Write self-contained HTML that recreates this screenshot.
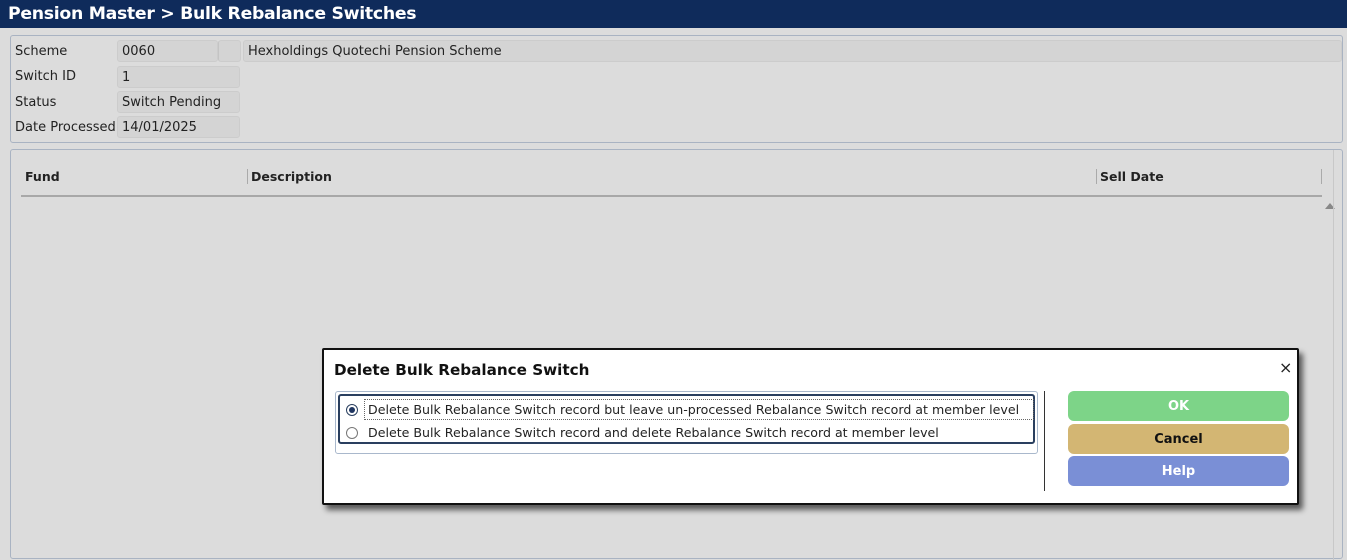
<!DOCTYPE html>
<html><head><style>
*{box-sizing:border-box;margin:0;padding:0}
body{width:1347px;height:548px;overflow:hidden;background:#dcdcdc;font-family:"DejaVu Sans","Liberation Sans",sans-serif;font-size:13px;color:#222;position:relative}
.title{position:absolute;left:0;top:0;width:1347px;height:28px;background:#0f2b5b;color:#fff;font-weight:bold;font-size:17.3px;line-height:28px;padding-left:8px;font-family:"DejaVu Sans",sans-serif;letter-spacing:-0.3px}
.p1{position:absolute;left:10px;top:35px;width:1333px;height:108px;border:1px solid #a9b3c2;border-radius:3px;background:#dcdcdc}
.lbl{position:absolute;left:4px}
.fld{position:absolute;background:#d4d4d4;border:1px solid #ccc;border-radius:3px;height:22px;line-height:22px;padding-left:4px}
.p2{position:absolute;left:10px;top:149px;width:1333px;height:410px;border:1px solid #a9b3c2;border-radius:3px;background:#dcdcdc}
.hd{position:absolute;top:19px;font-weight:bold;font-size:12.5px}
.dlg{position:absolute;left:322px;top:348px;width:977px;height:157px;background:#fff;border:2px solid #111;border-radius:2px;box-shadow:4px 5px 6px rgba(0,0,0,.6)}
.btn{position:absolute;left:744px;width:221px;height:30px;border-radius:6px;text-align:center;line-height:32px;font-weight:bold;font-size:13px}
.rad{position:absolute;left:6px;width:12px;height:12px;border:1px solid #777;border-radius:50%;background:#fff}
.dlg .opt{font-size:12.6px}
</style></head><body>
<div class="title">Pension Master &gt; Bulk Rebalance Switches</div>
<div class="p1">
<div class="lbl" style="top:8px">Scheme</div>
<div class="fld" style="left:106px;top:4px;width:101px">0060</div>
<div class="fld" style="left:207px;top:4px;width:23px;border-left:1px solid #c4c4c4"></div>
<div class="fld" style="left:232px;top:4px;width:1099px">Hexholdings Quotechi Pension Scheme</div>
<div class="lbl" style="top:33px">Switch ID</div>
<div class="fld" style="left:106px;top:30px;width:123px">1</div>
<div class="lbl" style="top:59px">Status</div>
<div class="fld" style="left:106px;top:55px;width:123px">Switch Pending</div>
<div class="lbl" style="top:84px">Date Processed</div>
<div class="fld" style="left:106px;top:80px;width:123px">14/01/2025</div>
</div>
<div class="p2">
<div class="hd" style="left:14px">Fund</div>
<div style="position:absolute;left:236px;top:19px;width:1px;height:15px;background:#aaa"></div>
<div class="hd" style="left:240px">Description</div>
<div style="position:absolute;left:1085px;top:19px;width:1px;height:15px;background:#aaa"></div>
<div class="hd" style="left:1089px">Sell Date</div>
<div style="position:absolute;left:1310px;top:19px;width:1px;height:15px;background:#aaa"></div>
<div style="position:absolute;left:10px;top:45px;width:1301px;height:2px;background:#a8a8a8"></div>
<div style="position:absolute;left:1314px;top:53px;width:0;height:0;border-left:5px solid transparent;border-right:5px solid transparent;border-bottom:6px solid #888"></div>
<div style="position:absolute;left:1322px;top:0;width:1px;height:410px;background:#c8c8c8"></div>
</div>
<div class="dlg">
<div style="position:absolute;left:10px;top:11px;font-size:15.2px;font-weight:bold;color:#111">Delete Bulk Rebalance Switch</div>
<div style="position:absolute;left:955px;top:8px;font-size:16px">×</div>
<div style="position:absolute;left:11px;top:41px;width:703px;height:63px;border:1px solid #a9b8cc;border-radius:3px"></div>
<div style="position:absolute;left:14px;top:44px;width:697px;height:50px;border:2px solid #2a3f5f;border-radius:3px">
<div class="rad" style="top:8px;border-color:#2a3f5f"><div style="position:absolute;left:2px;top:2px;width:6px;height:6px;border-radius:50%;background:#1f3560"></div></div>
<div class="opt" style="position:absolute;left:24px;top:3px;width:670px;height:21px;border:1px dotted #666;line-height:20px;padding-left:3px;white-space:nowrap">Delete Bulk Rebalance Switch record but leave un-processed Rebalance Switch record at member level</div>
<div class="rad" style="top:31px"></div>
<div class="opt" style="position:absolute;left:28px;top:27px;line-height:20px;white-space:nowrap">Delete Bulk Rebalance Switch record and delete Rebalance Switch record at member level</div>
</div>
<div style="position:absolute;left:720px;top:41px;width:1px;height:100px;background:#333"></div>
<div class="btn" style="top:41px;background:#7dd488;color:#fff">OK</div>
<div class="btn" style="top:74px;background:#d3b673;color:#111">Cancel</div>
<div class="btn" style="top:106px;background:#7a8fd6;color:#fff">Help</div>
</div>
</body></html>
